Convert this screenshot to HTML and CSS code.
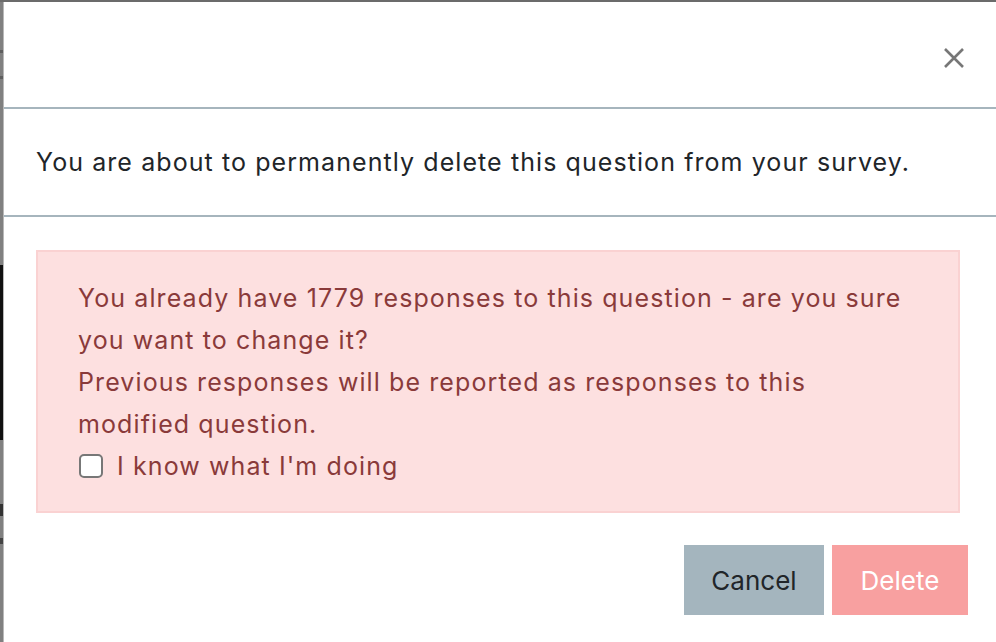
FILE: index.html
```html
<!DOCTYPE html>
<html>
<head>
<meta charset="utf-8">
<link rel="stylesheet" href="styles.css">
</head>
<body>
<div class="page">
  <div class="backdrop">
    <div class="bd-top"></div>
    <div class="bd-mark m1"></div>
    <div class="bd-mark m2"></div>
    <div class="bd-dark"></div>
    <div class="bd-mark m3"></div>
    <div class="bd-mark m4"></div>
  </div>
  <div class="modal">
    <div class="modal-header">
      <button class="close" aria-label="Close">
        <svg width="20" height="20" viewBox="0 0 20 20"><path d="M1 1 L19 19 M19 1 L1 19" stroke="#777" stroke-width="2.6" stroke-linecap="butt" fill="none"/></svg>
      </button>
    </div>
    <div class="modal-body">
      <p>You are about to permanently delete this question from your survey.</p>
    </div>
    <div class="modal-footer">
      <div class="alert">
        <p>You already have 1779 responses to this question - are you sure you want to change it?</p>
        <p>Previous responses will be reported as responses to this modified question.</p>
        <label class="check"><span class="box"></span>I know what I'm doing</label>
      </div>
      <div class="actions">
        <button class="btn btn-cancel">Cancel</button>
        <button class="btn btn-delete">Delete</button>
      </div>
    </div>
  </div>
</div>
</body>
</html>
```
FILE: styles.css
```css
html, body {
  margin: 0;
  padding: 0;
  height: 100%;
  overflow: hidden;
  background: #7c7c7c;
}
.page {
  display: flex;
  height: 642px;
  padding-top: 2px;
  box-sizing: border-box;
  background: #6b6b6b;
  font-family: "Inter", "Liberation Sans", sans-serif;
}
.backdrop {
  width: 3px;
  background: #808080;
  display: flex;
  flex-direction: column;
}
.bd-top { height: 48px; }
.bd-mark { height: 3px; background: #5e5e5e; }
.m1 { margin-bottom: 23px; }
.m2 { margin-bottom: 186px; }
.bd-dark { height: 175px; background: #111; margin-bottom: 64px; }
.m3 { height: 12px; background: #333; margin-bottom: 22px; }
.m4 { height: 6px; background: #444; }
.modal {
  flex: 1;
  min-width: 0;
  background: #fff;
  border-left: 1px solid #b8b8b8;
  display: flex;
  flex-direction: column;
}
.modal-header {
  border-bottom: 2px solid #a6b5bd;
  display: flex;
  justify-content: flex-end;
  align-items: center;
  padding-right: 32px;
  box-sizing: border-box;
  height: 107px;
}
.close {
  background: none;
  border: 0;
  padding: 0;
  margin-top: 6px;
  display: flex;
}
.modal-body {
  height: 108px;
  box-sizing: border-box;
  border-bottom: 2px solid #a6b5bd;
  display: flex;
  align-items: center;
  padding-left: 32px;
}
.modal-body p {
  margin: 0;
  font-size: 25px;
  letter-spacing: 1.08px;
  color: #212529;
}
.modal-footer {
  padding: 33px 0 0 32px;
}
.alert {
  width: 924px;
  box-sizing: border-box;
  background: #fde0e0;
  border: 2px solid #fad2d2;
  padding: 25px 44px 24px 40px;
  color: #8a3a3a;
  font-size: 25px;
  letter-spacing: 1.1px;
  line-height: 42px;
}
.alert p { margin: 0; }
.check {
  display: flex;
  align-items: center;
}
.box {
  width: 20px;
  height: 20px;
  border: 2px solid #777;
  border-radius: 5px;
  background: #fff;
  margin-right: 14px;
  margin-left: 1px;
}
.actions {
  display: flex;
  justify-content: flex-end;
  gap: 8px;
  margin-top: 32px;
  width: 932px;
}
.btn {
  height: 70px;
  border: 0;
  font-family: inherit;
  font-size: 26px;
  padding: 0;
}
.btn-cancel {
  width: 140px;
  background: #a4b5be;
  color: #212529;
}
.btn-delete {
  width: 136px;
  background: #f8a0a0;
  color: #fff;
}
```
